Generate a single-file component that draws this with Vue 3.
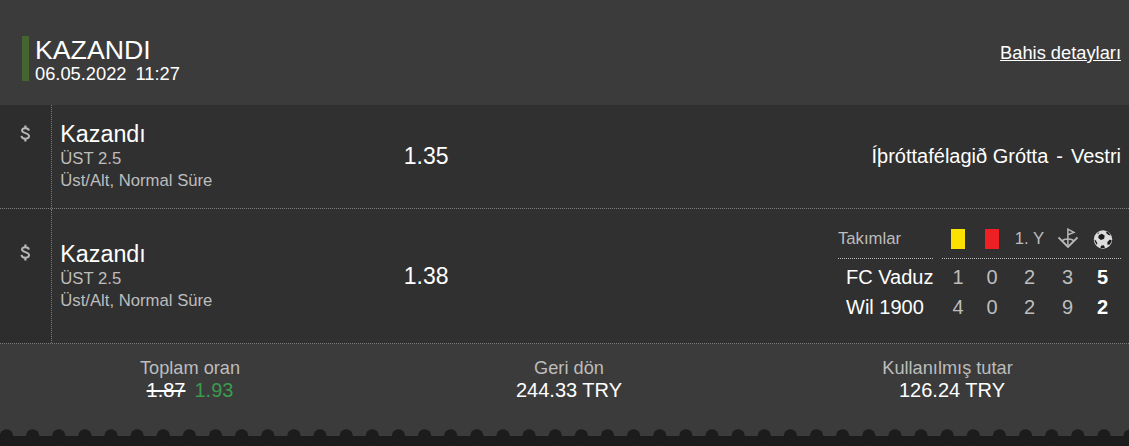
<script setup>
const bets = [
  { id: 1, odd: '1.35', home: 'Íþróttafélagið Grótta', away: 'Vestri' },
  {
    id: 2,
    odd: '1.38',
    teams: [
      { name: 'FC Vaduz', stats: [1, 0, 2, 3], goals: 5 },
      { name: 'Wil 1900', stats: [4, 0, 2, 9], goals: 2 }
    ]
  }
]
</script>

<template>
  <div class="coupon">
    <header class="head">
      <div class="status">
        <div class="status-title">KAZANDI</div>
        <div class="status-date"><span>06.05.2022</span><span>11:27</span></div>
      </div>
      <a href="#" class="details">Bahis detayları</a>
    </header>

    <div v-for="bet in bets" :key="bet.id" class="bet" :class="{ tall: bet.teams }">
      <div class="bet-icon">
        <svg width="11" height="17" viewBox="0 0 11 17" fill="none" stroke="#b8b8b8">
          <path d="M8.9 5.6C8.7 4 7.4 3.2 5.4 3.2S2 4.1 2 5.6C2 8.7 9.1 7.5 9.1 11.1C9.1 12.7 7.6 13.7 5.4 13.7S1.6 12.7 1.5 10.9" stroke-width="1.9" />
          <path d="M5.4 .6V3.2M5.4 13.7V16.4" stroke-width="2.2" />
        </svg>
      </div>
      <div class="bet-info">
        <div class="bet-result">Kazandı</div>
        <div class="bet-sub">ÜST 2.5</div>
        <div class="bet-sub">Üst/Alt, Normal Süre</div>
      </div>
      <div class="bet-odd">{{ bet.odd }}</div>

      <div v-if="bet.teams" class="score">
        <div class="names">
          <div class="score-head">Takımlar</div>
          <div v-for="team in bet.teams" :key="team.name" class="name">{{ team.name }}</div>
        </div>
        <div class="stats">
          <div class="score-head stat-row">
            <i class="card yellow"></i>
            <i class="card red"></i>
            <span>1. Y</span>
            <svg width="20" height="21" viewBox="0 0 20 21" fill="none" stroke="#b8b8b8" stroke-width="1.5">
              <path d="M9.9 18.5V1.2L15.9 4.4L9.9 6.8" />
              <path d="M.5 9.4L10 19L19.5 9.4" stroke-width="1.8" />
              <path d="M4.2 12.9C6 10.2 13.9 10.2 15.8 12.9" />
            </svg>
            <svg width="20" height="20" viewBox="0 0 20 20">
              <circle cx="10" cy="10.5" r="9.2" fill="#dcdcdc" />
              <g fill="#1b1b1b">
                <path d="M5.7 6.2L8.8 4.7L11.7 6.6L11.1 9.7L8 10.9L5.3 9Z" />
                <path d="M13 2.6L15.6 3.6L17.6 6.4L15.6 6L13.5 4.4Z" />
                <path d="M1.4 10.6L2.8 11.4L4.4 14.2L3.7 15.7Q1.7 13.6 1.4 10.6Z" />
                <path d="M14.4 13.1L16.6 10.8L18.6 11.1Q18.4 13.4 16.8 15.5L14.4 15.7Z" />
                <path d="M8 16.8L10.8 16.2L12 18.7Q9.6 19.4 7.4 18.8Z" />
                <path d="M3.9 4.9L6.6 2.8L5.4 4.7Z" />
              </g>
            </svg>
          </div>
          <div v-for="team in bet.teams" :key="team.name" class="stat-row values">
            <span v-for="(stat, i) in team.stats" :key="i">{{ stat }}</span>
            <b>{{ team.goals }}</b>
          </div>
        </div>
      </div>
      <div v-else class="match">
        <span>{{ bet.home }}</span><span>-</span><span>{{ bet.away }}</span>
      </div>
    </div>

    <footer class="totals">
      <div class="total">
        <div class="total-label">Toplam oran</div>
        <div class="total-value"><s>1.87</s><span class="boosted">1.93</span></div>
      </div>
      <div class="total">
        <div class="total-label">Geri dön</div>
        <div class="total-value">244.33 TRY</div>
      </div>
      <div class="total">
        <div class="total-label">Kullanılmış tutar</div>
        <div class="total-value">126.24 TRY</div>
      </div>
    </footer>

    <svg class="edge" width="1129" height="17">
      <rect y="7" width="1129" height="10" fill="#1c1c1c" />
      <circle v-for="n in 44" :key="n" :cx="6.5 + (n - 1) * 26.13" cy="7" r="6.7" fill="#1c1c1c" />
    </svg>
  </div>
</template>

<style>
body {
  margin: 0;
  background: #3b3b3b;
}
</style>

<style scoped>
.coupon {
  display: flex;
  flex-direction: column;
  width: 1129px;
  height: 446px;
  overflow: hidden;
  background: #3b3b3b;
  color: #fff;
  font-family: Arial, 'Liberation Sans', sans-serif;
}

.head {
  display: flex;
  justify-content: space-between;
  box-sizing: border-box;
  height: 105px;
  padding: 36px 8px 0 22px;
}

.status {
  height: 45px;
  padding-left: 6px;
  border-left: 7px solid #44652f;
}

.status-title {
  font-size: 26.7px;
  line-height: 28px;
}

.status-date {
  display: flex;
  gap: 9px;
  font-size: 18.3px;
  line-height: 20px;
}

.details {
  margin-top: 6px;
  color: #fff;
  font-size: 18.3px;
  line-height: 22px;
}

.bet {
  display: flex;
  box-sizing: border-box;
  height: 104px;
  border-bottom: 1px dotted #7d7d7d;
  background: #303030;
}

.bet.tall {
  height: 135px;
}

.bet-icon {
  box-sizing: border-box;
  width: 52px;
  padding: 20px 0 0 20px;
  border-right: 1px dotted #7d7d7d;
  background: #2d2d2d;
}

.bet-icon svg {
  display: block;
}

.tall .bet-icon {
  padding-top: 35px;
}

.bet-info {
  width: 343.5px;
  padding: 15px 0 0 8.3px;
}

.tall .bet-info {
  padding-top: 31px;
}

.bet-result {
  font-size: 23.3px;
  line-height: 28px;
}

.bet-sub {
  color: #bdbdbd;
  font-size: 16.7px;
  line-height: 21.5px;
}

.bet-odd {
  align-self: center;
  padding-bottom: 2px;
  font-size: 23px;
  line-height: 28px;
}

.tall .bet-odd {
  padding-bottom: 0;
}

.match {
  display: flex;
  align-self: center;
  gap: 8px;
  margin-left: auto;
  padding: 0 8px 2px 0;
  font-size: 20px;
  line-height: 24px;
}

.score {
  display: flex;
  gap: 9px;
  margin-left: auto;
  padding: 10px 8px 0 0;
}

.names {
  width: 95px;
}

.score-head {
  box-sizing: border-box;
  height: 40px;
  margin-bottom: 3px;
  border-bottom: 1px dotted #bdbdbd;
  color: #bdbdbd;
  font-size: 16.7px;
  line-height: 39px;
}

.name {
  padding-left: 8px;
  font-size: 20px;
  line-height: 30px;
  white-space: nowrap;
}

.stats {
  width: 179px;
}

.stat-row {
  display: grid;
  grid-template-columns: 32px 36px 39px 37px 33px;
  align-items: center;
  justify-items: center;
}

.card {
  width: 14px;
  height: 20px;
}

.yellow {
  background: #fae100;
}

.red {
  background: #ee2024;
}

.values {
  color: #bdbdbd;
  font-size: 20px;
  line-height: 30px;
}

.values b {
  color: #fff;
}

.totals {
  display: grid;
  grid-template-columns: 380px 378px 379px;
  padding-top: 13px;
}

.total {
  text-align: center;
}

.total-label {
  color: #bdbdbd;
  font-size: 18.2px;
  line-height: 22px;
}

.total-value {
  font-size: 20px;
  line-height: 23px;
}

.total:last-child .total-value {
  padding-left: 9px;
}

.boosted {
  margin-left: 9px;
  color: #3a9b4d;
}

.edge {
  display: block;
  flex-shrink: 0;
  margin-top: auto;
}
</style>
